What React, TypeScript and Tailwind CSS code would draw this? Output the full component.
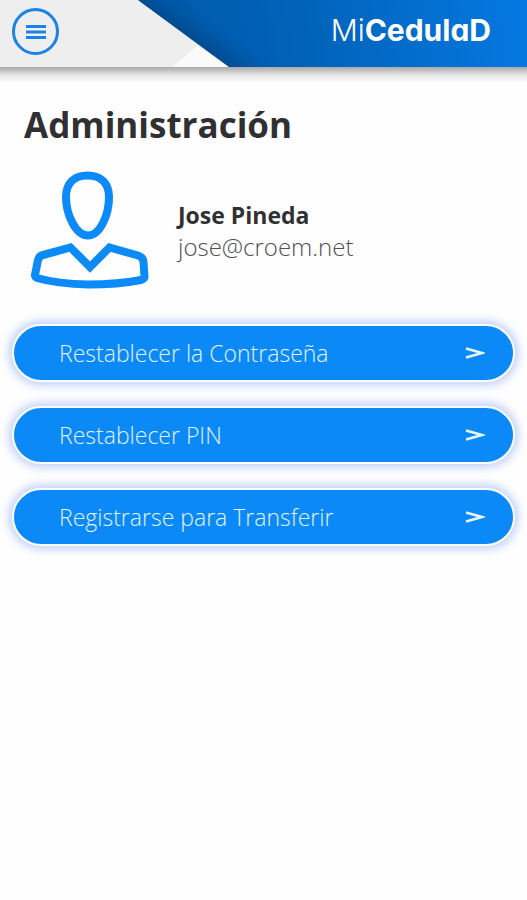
const actions = ["Restablecer la Contraseña", "Restablecer PIN", "Registrarse para Transferir"];

function HeaderArt() {
  return (
    <svg
      className="absolute inset-0 h-full w-full"
      viewBox="0 0 527 67"
      preserveAspectRatio="none"
      aria-hidden="true"
    >
      <defs>
        <linearGradient id="blue" gradientUnits="userSpaceOnUse" x1="200" y1="67" x2="527" y2="0">
          <stop offset="0" stopColor="#005cae" />
          <stop offset="0.3" stopColor="#0062b8" />
          <stop offset="1" stopColor="#0579e2" />
        </linearGradient>
        <linearGradient id="edge" gradientUnits="userSpaceOnUse" x1="183" y1="33" x2="200" y2="10">
          <stop offset="0" stopColor="#003c78" stopOpacity="0.55" />
          <stop offset="0.5" stopColor="#003c78" stopOpacity="0.2" />
          <stop offset="1" stopColor="#003c78" stopOpacity="0" />
        </linearGradient>
      </defs>
      <path d="M172 67 L197 46 L231 67 Z" fill="#fafafa" />
      <path d="M138 0 H527 V67 H229 Z" fill="url(#blue)" />
      <path d="M138 0 H527 V67 H229 Z" fill="url(#edge)" />
    </svg>
  );
}

function MenuIcon() {
  return (
    <svg width="20" height="16" viewBox="0 0 20 16" fill="none" stroke="#1a83e6" strokeWidth="3" aria-hidden="true">
      <path d="M0 2.5H20M0 8H20M0 13.5H20" />
    </svg>
  );
}

function Avatar() {
  return (
    <svg
      width="120"
      height="120"
      viewBox="0 1 120 120"
      fill="none"
      stroke="#0b8af8"
      strokeWidth="8"
      className="shrink-0"
      aria-hidden="true"
    >
      <path d="M57.500 5.500C44 5.500 36 13 36 27C36 45 46 65.500 58 65.500C70 65.500 79 45 79 27C79 13 71 5.500 57.500 5.500Z" />
      <path d="M40.500 77.500L60 97L79.500 77.500L108 85.500Q113 87 113.500 92L114.500 107Q114 109 111 110Q88 114.500 58 114.500Q28 114 7 108Q5 107 5 105L8 90Q9 86 13 85Z" />
    </svg>
  );
}

function Chevron() {
  return (
    <svg width="20" height="12" viewBox="0 0 20 12" fill="none" stroke="#e8f6ff" strokeWidth="2.500" aria-hidden="true">
      <path d="M1 1.500L17 6L1 10.500" />
    </svg>
  );
}

export default function App() {
  return (
    <div className="min-h-screen bg-[#fefefe] font-['Open_Sans','Noto_Sans',sans-serif] text-[#303033]">
      <header className="relative flex h-[67px] items-center justify-between bg-[#eeeeee] pl-3 pr-9">
        <HeaderArt />
        <button
          type="button"
          aria-label="Menú"
          className="relative -mt-1 flex size-[47px] items-center justify-center rounded-full border-[3px] border-[#1a83e6]"
        >
          <MenuIcon />
        </button>
        <span className="relative -mt-2 font-[Inter,sans-serif] text-[30px] leading-8 text-white [font-feature-settings:'cv11']">
          <span className="font-light">Mi</span>
          <span className="font-bold">CedulaD</span>
        </span>
      </header>
      <div className="h-4 bg-linear-to-b from-[#a9a9a9] via-[#e4e4e4] to-[#fefefe]" />

      <main className="px-3">
        <h1 className="px-3 pt-5 text-[35px] leading-[44px] font-bold">Administración</h1>

        <section className="flex items-center gap-7 px-[18px] pt-6">
          <Avatar />
          <div className="leading-8">
            <p className="text-[23px] font-bold">Jose Pineda</p>
            <p className="text-[24px] font-light text-[#505054]">jose@croem.net</p>
          </div>
        </section>

        <nav className="flex flex-col gap-6 pt-[33px]">
          {actions.map((label) => (
            <button
              key={label}
              type="button"
              className="flex h-[58px] w-full items-center justify-between rounded-full border-2 border-white bg-[#0b89f7] pr-7 pl-[45px] text-[23px] font-light text-[#e2f3ff] shadow-[0_0_10px_3px_#bccdf6]"
            >
              <span>{label}</span>
              <Chevron />
            </button>
          ))}
        </nav>
      </main>
    </div>
  );
}
